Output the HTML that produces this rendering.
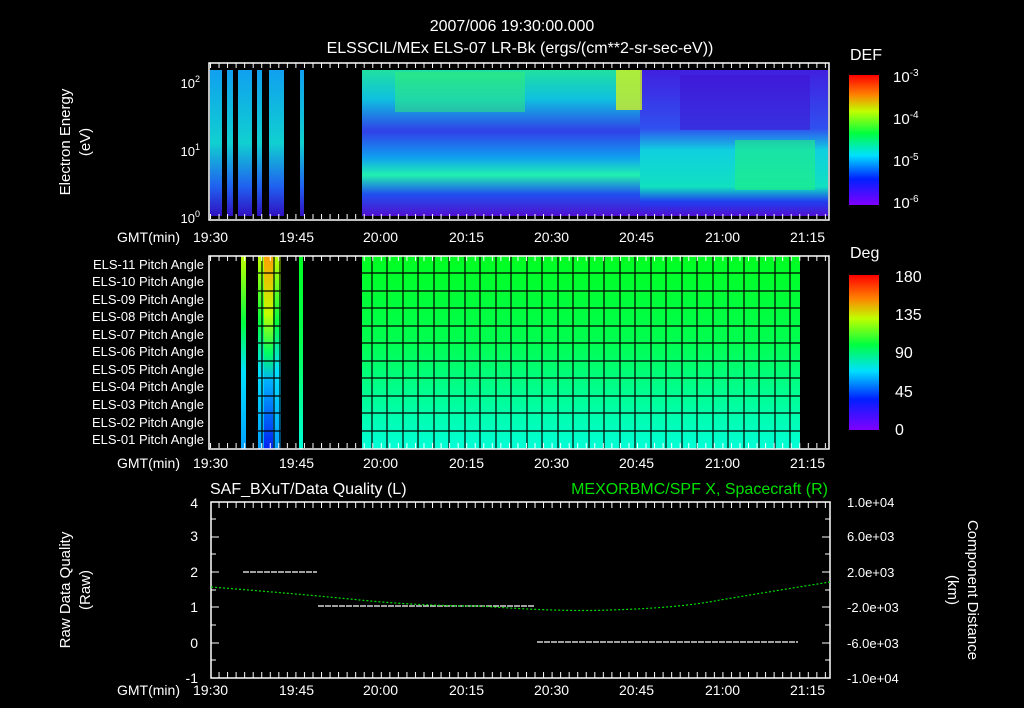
<!DOCTYPE html>
<html><head><meta charset="utf-8"><style>
html,body{margin:0;padding:0;background:#000;width:1024px;height:708px;overflow:hidden}
svg text{font-family:"Liberation Sans",sans-serif;fill:#fff}
</style></head><body>
<svg width="1024" height="708" viewBox="0 0 1024 708" xmlns="http://www.w3.org/2000/svg">
<defs>
<linearGradient id="cb" x1="0" y1="1" x2="0" y2="0">
<stop offset="0" stop-color="#8000ff"/><stop offset="0.2" stop-color="#0020ff"/><stop offset="0.38" stop-color="#00e0ff"/><stop offset="0.55" stop-color="#00ff40"/><stop offset="0.72" stop-color="#c0ff00"/><stop offset="0.85" stop-color="#ff8000"/><stop offset="1" stop-color="#ff0000"/>
</linearGradient>
<linearGradient id="pa" x1="0" y1="0" x2="0" y2="1">
<stop offset="0" stop-color="#00ff20"/><stop offset="0.45" stop-color="#00ff50"/><stop offset="1" stop-color="#00ffd8"/>
</linearGradient>
<linearGradient id="pl" x1="0" y1="0" x2="0" y2="1">
<stop offset="0" stop-color="#c0ff00"/><stop offset="0.35" stop-color="#00ff40"/><stop offset="0.6" stop-color="#00e0ff"/><stop offset="1" stop-color="#00a0ff"/>
</linearGradient>
<linearGradient id="pl2" x1="0" y1="0" x2="0" y2="1">
<stop offset="0" stop-color="#ffa000"/><stop offset="0.3" stop-color="#c0ff00"/><stop offset="0.5" stop-color="#00ff60"/><stop offset="0.65" stop-color="#00b0ff"/><stop offset="1" stop-color="#0020f0"/>
</linearGradient>
<linearGradient id="sp1" x1="0" y1="0" x2="0" y2="1">
<stop offset="0" stop-color="#20e0a0"/><stop offset="0.2" stop-color="#10c0e0"/><stop offset="0.42" stop-color="#3040e8"/><stop offset="0.6" stop-color="#10a0f0"/><stop offset="0.72" stop-color="#20f0b0"/><stop offset="0.85" stop-color="#2050f0"/><stop offset="1" stop-color="#5010d0"/>
</linearGradient>
<linearGradient id="sp2" x1="0" y1="0" x2="0" y2="1">
<stop offset="0" stop-color="#4020e0"/><stop offset="0.4" stop-color="#3050f0"/><stop offset="0.55" stop-color="#10d0e0"/><stop offset="0.8" stop-color="#10e0c0"/><stop offset="0.9" stop-color="#2040f0"/><stop offset="1" stop-color="#5010d0"/>
</linearGradient>
<linearGradient id="sp0" x1="0" y1="0" x2="0" y2="1">
<stop offset="0" stop-color="#10a0f0"/><stop offset="0.5" stop-color="#10d0d0"/><stop offset="0.8" stop-color="#2060f0"/><stop offset="1" stop-color="#3010c0"/>
</linearGradient>
<pattern id="tk" x="210" y="0" width="8.54" height="708" patternUnits="userSpaceOnUse">
<rect x="0" y="0" width="1" height="708" fill="#fff"/>
</pattern>
</defs>

<text x="512" y="31" font-size="16" text-anchor="middle">2007/006 19:30:00.000</text>
<text x="520" y="53" font-size="16" text-anchor="middle">ELSSCIL/MEx ELS-07 LR-Bk  (ergs/(cm**2-sr-sec-eV))</text>

<!-- Panel 1 -->
<rect x="210" y="70" width="30" height="146" fill="url(#sp0)"/>
<rect x="222" y="70" width="5" height="146" fill="#000"/>
<rect x="233" y="70" width="5" height="146" fill="#000"/>
<rect x="252" y="70" width="5" height="146" fill="#000"/>
<rect x="240" y="70" width="12" height="146" fill="url(#sp0)"/>
<rect x="257" y="70" width="27" height="146" fill="url(#sp0)"/>
<rect x="262" y="70" width="7" height="146" fill="#000"/>
<rect x="300" y="70" width="4" height="146" fill="url(#sp0)"/>
<rect x="362" y="70" width="278" height="146" fill="url(#sp1)"/>
<rect x="640" y="70" width="188" height="146" fill="url(#sp2)"/>
<rect x="395" y="72" width="130" height="40" fill="#30f070" opacity="0.5"/>
<rect x="616" y="70" width="26" height="40" fill="#d0f020" opacity="0.8"/>
<rect x="735" y="140" width="80" height="50" fill="#20f080" opacity="0.6"/>
<rect x="680" y="75" width="130" height="55" fill="#4010d0" opacity="0.5"/>
<rect x="209" y="63" width="620" height="157" fill="none" stroke="#fff" stroke-width="1.5"/>
<rect x="210" y="63" width="619" height="5" fill="url(#tk)"/>
<rect x="210" y="214" width="619" height="5" fill="url(#tk)"/>
<text x="200" y="88" font-size="13" text-anchor="end">10<tspan dy="-6" font-size="9">2</tspan></text>
<text x="200" y="156" font-size="13" text-anchor="end">10<tspan dy="-6" font-size="9">1</tspan></text>
<text x="200" y="223" font-size="13" text-anchor="end">10<tspan dy="-6" font-size="9">0</tspan></text>
<text transform="translate(70,142) rotate(-90)" font-size="15" text-anchor="middle">Electron Energy</text>
<text transform="translate(90,142) rotate(-90)" font-size="15" text-anchor="middle">(eV)</text>
<g font-size="14">
<text x="117" y="242">GMT(min)</text><text x="193" y="242">19:30</text><text x="279" y="242">19:45</text><text x="363" y="242">20:00</text><text x="449" y="242">20:15</text><text x="534" y="242">20:30</text><text x="619" y="242">20:45</text><text x="705" y="242">21:00</text><text x="790" y="242">21:15</text>
</g>
<text x="850" y="60" font-size="16">DEF</text>
<rect x="849" y="75" width="30" height="130" fill="url(#cb)"/>
<text x="893" y="82" font-size="15">10<tspan dy="-6" font-size="10">-3</tspan></text>
<text x="893" y="124" font-size="15">10<tspan dy="-6" font-size="10">-4</tspan></text>
<text x="893" y="166" font-size="15">10<tspan dy="-6" font-size="10">-5</tspan></text>
<text x="893" y="208" font-size="15">10<tspan dy="-6" font-size="10">-6</tspan></text>

<!-- Panel 2 -->
<rect x="241" y="256" width="5" height="193" fill="url(#pl)"/>
<rect x="258" y="256" width="23" height="193" fill="url(#pl)"/>
<rect x="264" y="256" width="9" height="193" fill="url(#pl2)"/>
<rect x="299" y="256" width="4" height="193" fill="url(#pa)"/>
<rect x="362" y="256" width="438" height="193" fill="url(#pa)"/>
<g stroke="#000" stroke-width="1.2">
<path d="M258 273H281M258 291H281M258 308H281M258 326H281M258 343H281M258 361H281M258 378H281M258 396H281M258 413H281M258 431H281M262 256V449M274 256V449M280 256V449"/>
<path d="M362 273H800M362 291H800M362 308H800M362 326H800M362 343H800M362 361H800M362 378H800M362 396H800M362 413H800M362 431H800"/>
<path d="M372 256V449M387 256V449M403 256V449M418 256V449M434 256V449M449 256V449M465 256V449M480 256V449M496 256V449M511 256V449M527 256V449M542 256V449M558 256V449M573 256V449M589 256V449M604 256V449M620 256V449M635 256V449M651 256V449M666 256V449M682 256V449M697 256V449M713 256V449M728 256V449M744 256V449M759 256V449M775 256V449M790 256V449"/>
</g>
<rect x="209" y="256" width="620" height="193" fill="none" stroke="#fff" stroke-width="1.5"/>
<rect x="210" y="256" width="619" height="5" fill="url(#tk)"/>
<rect x="210" y="443" width="619" height="5" fill="url(#tk)"/>
<g font-size="13" text-anchor="end">
<text x="204" y="269">ELS-11 Pitch Angle</text><text x="204" y="286">ELS-10 Pitch Angle</text><text x="204" y="304">ELS-09 Pitch Angle</text><text x="204" y="321">ELS-08 Pitch Angle</text><text x="204" y="339">ELS-07 Pitch Angle</text><text x="204" y="356">ELS-06 Pitch Angle</text><text x="204" y="374">ELS-05 Pitch Angle</text><text x="204" y="391">ELS-04 Pitch Angle</text><text x="204" y="409">ELS-03 Pitch Angle</text><text x="204" y="427">ELS-02 Pitch Angle</text><text x="204" y="444">ELS-01 Pitch Angle</text>
</g>
<g font-size="14">
<text x="117" y="468">GMT(min)</text><text x="193" y="468">19:30</text><text x="279" y="468">19:45</text><text x="363" y="468">20:00</text><text x="449" y="468">20:15</text><text x="534" y="468">20:30</text><text x="619" y="468">20:45</text><text x="705" y="468">21:00</text><text x="790" y="468">21:15</text>
</g>
<text x="850" y="258" font-size="16">Deg</text>
<rect x="849" y="275" width="30" height="155" fill="url(#cb)"/>
<g font-size="16"><text x="895" y="282">180</text><text x="895" y="320">135</text><text x="895" y="358">90</text><text x="895" y="397">45</text><text x="895" y="435">0</text></g>

<!-- Panel 3 -->
<text x="210" y="494" font-size="16">SAF_BXuT/Data Quality (L)</text>
<text x="828" y="494" font-size="16" text-anchor="end" style="fill:#00e000">MEXORBMC/SPF X, Spacecraft (R)</text>
<rect x="211" y="502" width="619" height="176" fill="none" stroke="#fff" stroke-width="1.5"/>
<rect x="211" y="502" width="619" height="6" fill="url(#tk)"/>
<rect x="211" y="672" width="619" height="6" fill="url(#tk)"/>
<g stroke="#fff" stroke-width="1">
<path d="M211 519h5M211 537h8M211 554h5M211 572h8M211 590h5M211 607h8M211 625h5M211 643h8M211 660h5M830 519h-5M830 537h-8M830 554h-5M830 572h-8M830 590h-5M830 607h-8M830 625h-5M830 643h-8M830 660h-5"/>
</g>
<g font-size="14" text-anchor="end">
<text x="198" y="508">4</text><text x="198" y="541">3</text><text x="198" y="577">2</text><text x="198" y="612">1</text><text x="198" y="648">0</text><text x="198" y="683">-1</text>
</g>
<g font-size="13">
<text x="847" y="507">1.0e+04</text><text x="847" y="541">6.0e+03</text><text x="847" y="577">2.0e+03</text><text x="847" y="612">-2.0e+03</text><text x="847" y="648">-6.0e+03</text><text x="847" y="683">-1.0e+04</text>
</g>
<text transform="translate(70,590) rotate(-90)" font-size="15" text-anchor="middle">Raw Data Quality</text>
<text transform="translate(90,590) rotate(-90)" font-size="15" text-anchor="middle">(Raw)</text>
<text transform="translate(968,590) rotate(90)" font-size="15" text-anchor="middle">Component Distance</text>
<text transform="translate(948,590) rotate(90)" font-size="15" text-anchor="middle">(km)</text>
<g stroke="#fff" stroke-width="1.2" stroke-dasharray="6,1" fill="none">
<path d="M243 572H317M318 606H535M537 642H798"/>
</g>
<path d="M211 587 Q300 594 360 600 T480 606 Q560 612 610 610 Q680 608 720 600 Q780 590 830 582" stroke="#00e000" stroke-width="1.2" stroke-dasharray="2,2" fill="none"/>
<g font-size="14">
<text x="117" y="695">GMT(min)</text><text x="193" y="695">19:30</text><text x="279" y="695">19:45</text><text x="363" y="695">20:00</text><text x="449" y="695">20:15</text><text x="534" y="695">20:30</text><text x="619" y="695">20:45</text><text x="705" y="695">21:00</text><text x="790" y="695">21:15</text>
</g>
</svg>
</body></html>
